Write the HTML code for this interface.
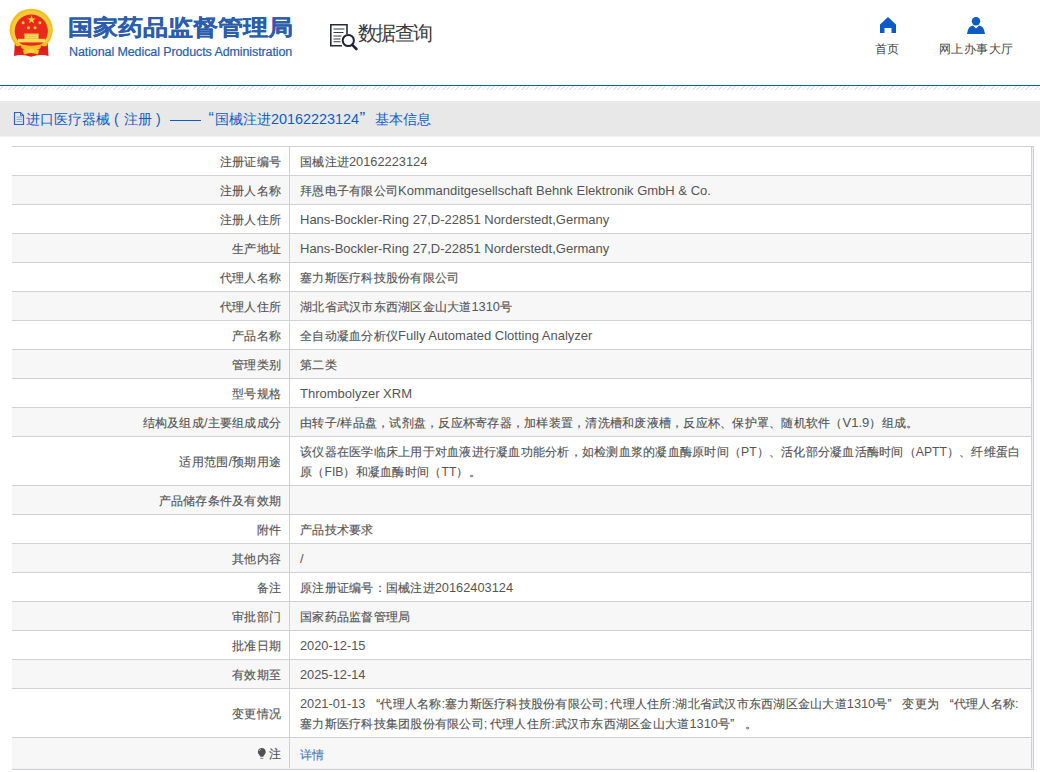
<!DOCTYPE html>
<html><head><meta charset="utf-8">
<style>
*{margin:0;padding:0;box-sizing:border-box}
html,body{text-spacing-trim:space-all;width:1040px;height:772px;overflow:hidden;background:#fff;font-family:"Liberation Sans",sans-serif}
.abs{position:absolute}
#hdrline{position:absolute;left:0;top:85px;width:1040px;height:1px;background:#0a5cc0}
#hatch{position:absolute;left:0;top:86px;width:1040px;height:4px;background:repeating-linear-gradient(135deg,#fff 0,#fff 2px,#e6e6e6 2px,#e6e6e6 3.1px)}
#bar{position:absolute;left:0;top:101px;width:1040px;height:35px;background:#e8e8e8}
#bartext{position:absolute;left:26px;top:109px;font-size:14px;line-height:20px;color:#0f5cc4;white-space:nowrap}
#bartext span{position:absolute;top:0}
#tbl{position:absolute;left:12px;top:146px;width:1022px;height:624px;border-right:1px solid #d0d0d0;border-bottom:1px solid #d0d0d0}
#tbl:before{content:"";position:absolute;left:0;top:622px;width:1021px;height:1px;background:#eef0f6}
#tbl:after{content:"";position:absolute;left:1020px;top:1px;width:1px;height:622px;background:#eef0f6}
.row{position:absolute;left:0;width:1020px;border-top:1px solid #d0d0d0;border-right:1px solid #d0d0d0;font-size:12px;color:#555;line-height:20px;letter-spacing:0.25px;-webkit-text-stroke:0.15px #555}
.row.alt{background:#f7f7f7}
.lab{position:absolute;left:0;top:0;width:278px;height:100%;border-right:1px solid #d0d0d0}
.lab span{position:absolute;right:8px;top:5px;white-space:nowrap}
.val{position:absolute;left:278px;top:0;right:0;height:100%}
.val span{position:absolute;left:10px;top:5px;white-space:nowrap}
.val a{color:#3b8cf4;text-decoration:none}
i{font-style:normal}
.lat{font-size:13px;letter-spacing:0;-webkit-text-stroke:0}
.num{font-size:12.8px;letter-spacing:0;-webkit-text-stroke:0}
.ql,.qr{display:inline-block;width:12.25px;letter-spacing:0}
.ql{text-align:right}
.r10 .lat{font-size:12.2px}
.r18 .val span{word-spacing:-1px}
.bulb{display:inline-block;width:9px;height:12px}
</style></head>
<body>
<!-- emblem -->
<svg class="abs" style="left:0;top:0" width="60" height="62" viewBox="0 0 60 62">
 <path d="M15 40 L14 56 Q22 53.5 31 56.8 Q40 53.5 48.5 56 L47.5 40 Z" fill="#e3221a"/>
 <path d="M9.6 30.3 A21.6 21.6 0 1 1 52.8 30.3 Q52 40 46 45.5 L38.5 49 Q31 52 23.5 49 L16.5 45.5 Q10.4 40 9.6 30.3 Z" fill="#f1bd1f"/>
 <circle cx="31.2" cy="30.6" r="19.6" fill="#f6cc3a"/>
 <circle cx="31.3" cy="31" r="16.6" fill="#e8291c"/>
 <rect x="18" y="38.8" width="27" height="3.6" fill="#f9dc5a"/>
 <rect x="24.5" y="34.2" width="14" height="4.6" fill="#f9dc5a"/>
 <path d="M23.5 34.6 H39.5 L38.5 33.6 H24.5 Z" fill="#f3c640"/>
 <rect x="26" y="36" width="11" height="1" fill="#eec24a"/>
 <path d="M14.8 42 Q31 49.5 47.8 42 L46.8 45.8 Q31 53 15.8 45.8 Z" fill="#f2be22"/>
 <path d="M16 47 L21 45.5 L22 50.5 L17 52 Z M46 47 L41 45.5 L40 50.5 L45 52 Z" fill="#d81e16"/>
 <path d="M23 50 Q31 45.5 39 50 L38 54.5 Q31 51.5 24 54.5 Z" fill="#f4c52a"/>
 <ellipse cx="31" cy="51" rx="3.2" ry="1.8" fill="#f8d650"/>
 <path d="M31.5 15.2 L32.6 18.4 L35.8 18.4 L33.2 20.3 L34.2 23.4 L31.5 21.5 L28.8 23.4 L29.8 20.3 L27.2 18.4 L30.4 18.4Z" fill="#f6d23a"/>
 <circle cx="23.1" cy="22.8" r="1.5" fill="#f6d23a"/>
 <circle cx="39.9" cy="22.8" r="1.5" fill="#f6d23a"/>
 <circle cx="28.4" cy="27.7" r="1.5" fill="#f6d23a"/>
 <circle cx="35" cy="27.7" r="1.5" fill="#f6d23a"/>
</svg>
<div class="abs" style="left:68px;top:11px;font-size:24.6px;line-height:30px;font-weight:900;color:#2c5dab;-webkit-text-stroke:0.25px #2c5dab;white-space:nowrap;transform:scaleY(0.88);transform-origin:0 100%">国家药品监督管理局</div>
<div class="abs" style="left:69px;top:44px;font-size:12.5px;line-height:16px;color:#2c5dab;-webkit-text-stroke:0.2px #2c5dab;white-space:nowrap;letter-spacing:-0.1px">National Medical Products Administration</div>
<!-- search doc icon -->
<svg class="abs" style="left:328px;top:22px" width="32" height="32" viewBox="0 0 32 32">
 <path d="M14 23.8 H2.8 V2.8 H19 V12" fill="none" stroke="#2a2a3a" stroke-width="1.6"/>
 <path d="M5.5 7 H16.5 M5.5 10.5 H15.5 M5.5 14 H13.5 M5.5 17 H12.5 M5.5 19.8 H12.5" stroke="#3a3a48" stroke-width="1.1"/>
 <circle cx="20.3" cy="18.5" r="5.6" fill="none" stroke="#222236" stroke-width="2"/>
 <path d="M24.3 22.8 L28.4 27" stroke="#222236" stroke-width="2.6" stroke-linecap="round"/>
</svg>
<div class="abs" style="left:358px;top:20px;font-size:20px;line-height:26px;letter-spacing:-1.6px;color:#3a3a3a;white-space:nowrap">数据查询</div>
<!-- home icon -->
<svg class="abs" style="left:879px;top:16px" width="18" height="18" viewBox="0 0 18 18">
 <path d="M9 1 L17 8.5 V17 H12.5 V12 H5.5 V17 H1 V8.5 Z" fill="#0b5bc5"/>
</svg>
<div class="abs" style="left:875px;top:41px;font-size:12px;line-height:17px;letter-spacing:0.3px;color:#444;white-space:nowrap">首页</div>
<!-- user icon -->
<svg class="abs" style="left:966px;top:16px" width="20" height="19" viewBox="0 0 20 19">
 <circle cx="10" cy="5.2" r="4.2" fill="#0b5bc5"/>
 <path d="M1 18 Q2 10 7 9.6 L10 12.5 L13 9.6 Q18 10 19 18 Z" fill="#0b5bc5"/>
</svg>
<div class="abs" style="left:939px;top:41px;font-size:12px;line-height:17px;letter-spacing:0.45px;color:#444;white-space:nowrap">网上办事大厅</div>

<div id="hdrline"></div>
<div id="hatch"></div>
<div id="bar"></div><div class="abs" style="left:0;top:136px;width:1040px;height:1px;background:#f1f3f8"></div>
<svg class="abs" style="left:13px;top:111px" width="13" height="15" viewBox="0 0 13 15">
 <path d="M1.5 1.5 H7.5 L10.5 4.5 V13.5 H1.5 Z" fill="none" stroke="#2f63c9" stroke-width="1.2"/>
 <path d="M7.5 1.5 V4.5 H10.5" fill="none" stroke="#2f63c9" stroke-width="0.8"/>
 <path d="M3.5 6 H9 M3.5 8.3 H9 M3.5 10.6 H9" stroke="#7d9be0" stroke-width="0.9"/>
</svg>
<div id="bartext">
<span style="left:0">进口医疗器械</span>
<span style="left:88px;font-family:'Liberation Sans'">(</span>
<span style="left:98px">注册</span>
<span style="left:130px;font-family:'Liberation Sans'">)</span>
<b style="position:absolute;left:144px;top:11px;width:31px;height:1px;background:#0f5cc4"></b>
<span style="left:182.5px;font-family:'Liberation Sans';font-size:16px">&#8220;</span>
<span style="left:189px">国械注进<i style="font-style:normal;font-size:14.4px">20162223124</i><i style="font-style:normal;font-family:'Liberation Sans';font-size:17px;margin-left:.5px">&#8221;</i></span>
<span style="left:349px">基本信息</span>
</div>

<svg class="abs" style="left:256px;top:746px;z-index:2" width="11" height="14" viewBox="0 0 11 14">
 <path d="M5.8 2 C3.6 2 1.9 3.7 1.9 5.9 C1.9 7.6 3 8.3 3.7 9.6 L4.4 10.8 H7.2 L7.9 9.6 C8.6 8.3 9.7 7.6 9.7 5.9 C9.7 3.7 8 2 5.8 2 Z" fill="#505050"/>
 <path d="M3.3 5 Q3.6 3.6 5 3.1" stroke="#bdbdbd" stroke-width="0.9" fill="none"/>
 <rect x="4.3" y="11.8" width="3" height="1" fill="#777"/>
</svg>
<div id="tbl"><b style="position:absolute;left:0;top:0;width:1021px;height:1px;background:#d0d0d0;z-index:1"></b>
<div class="row r0" style="top:0px;height:29px"><div class="lab"><span>注册证编号</span></div><div class="val"><span>国械注进<i class="num">20162223124</i></span></div></div>
<div class="row alt r1" style="top:29px;height:29px"><div class="lab"><span>注册人名称</span></div><div class="val"><span>拜恩电子有限公司<i class="lat">Kommanditgesellschaft Behnk Elektronik GmbH &amp; Co.</i></span></div></div>
<div class="row r2" style="top:58px;height:29px"><div class="lab"><span>注册人住所</span></div><div class="val"><span><i class="lat">Hans-Bockler-Ring 27,D-22851 Norderstedt,Germany</i></span></div></div>
<div class="row alt r3" style="top:87px;height:29px"><div class="lab"><span>生产地址</span></div><div class="val"><span><i class="lat">Hans-Bockler-Ring 27,D-22851 Norderstedt,Germany</i></span></div></div>
<div class="row r4" style="top:116px;height:29px"><div class="lab"><span>代理人名称</span></div><div class="val"><span>塞力斯医疗科技股份有限公司</span></div></div>
<div class="row alt r5" style="top:145px;height:29px"><div class="lab"><span>代理人住所</span></div><div class="val"><span>湖北省武汉市东西湖区金山大道<i class="num">1310</i>号</span></div></div>
<div class="row r6" style="top:174px;height:29px"><div class="lab"><span>产品名称</span></div><div class="val"><span>全自动凝血分析仪<i class="lat">Fully Automated Clotting Analyzer</i></span></div></div>
<div class="row alt r7" style="top:203px;height:29px"><div class="lab"><span>管理类别</span></div><div class="val"><span>第二类</span></div></div>
<div class="row r8" style="top:232px;height:29px"><div class="lab"><span>型号规格</span></div><div class="val"><span><i class="lat">Thrombolyzer XRM</i></span></div></div>
<div class="row alt r9" style="top:261px;height:29px"><div class="lab"><span>结构及组成<i class="num">/</i>主要组成成分</span></div><div class="val"><span>由转子<i class="num">/</i>样品盘，试剂盘，反应杯寄存器，加样装置，清洗槽和废液槽，反应杯、保护罩、随机软件（<i class="lat">V1.9</i>）组成。</span></div></div>
<div class="row r10" style="top:290px;height:49px"><div class="lab"><span style="top:15px">适用范围<i class="num">/</i>预期用途</span></div><div class="val"><span>该仪器在医学临床上用于对血液进行凝血功能分析，如检测血浆的凝血酶原时间（<i class="lat">PT</i>）、活化部分凝血活酶时间（<i class="lat">APTT</i>）、纤维蛋白<br>原（<i class="lat">FIB</i>）和凝血酶时间（<i class="lat">TT</i>）。</span></div></div>
<div class="row alt r11" style="top:339px;height:29px"><div class="lab"><span>产品储存条件及有效期</span></div><div class="val"><span></span></div></div>
<div class="row r12" style="top:368px;height:29px"><div class="lab"><span>附件</span></div><div class="val"><span>产品技术要求</span></div></div>
<div class="row alt r13" style="top:397px;height:29px"><div class="lab"><span>其他内容</span></div><div class="val"><span><i class="num">/</i></span></div></div>
<div class="row r14" style="top:426px;height:29px"><div class="lab"><span>备注</span></div><div class="val"><span>原注册证编号：国械注进<i class="num">20162403124</i></span></div></div>
<div class="row alt r15" style="top:455px;height:29px"><div class="lab"><span>审批部门</span></div><div class="val"><span>国家药品监督管理局</span></div></div>
<div class="row r16" style="top:484px;height:29px"><div class="lab"><span>批准日期</span></div><div class="val"><span><i class="num">2020-12-15</i></span></div></div>
<div class="row alt r17" style="top:513px;height:29px"><div class="lab"><span>有效期至</span></div><div class="val"><span><i class="num">2025-12-14</i></span></div></div>
<div class="row r18" style="top:542px;height:49px"><div class="lab"><span style="top:15px">变更情况</span></div><div class="val"><span><i class="num">2021-01-13 </i><i class="ql">“</i>代理人名称<i class="num">:</i>塞力斯医疗科技股份有限公司<i class="num">; </i>代理人住所<i class="num">:</i>湖北省武汉市东西湖区金山大道<i class="num">1310</i>号<i class="qr">”</i><i class="num"> </i>变更为<i class="num"> </i><i class="ql">“</i>代理人名称<i class="num">:</i><br>塞力斯医疗科技集团股份有限公司<i class="num">; </i>代理人住所<i class="num">:</i>武汉市东西湖区金山大道<i class="num">1310</i>号<i class="qr">”</i><i class="num"> </i>。</span></div></div>
<div class="row alt r19" style="top:591px;height:31px"><div class="lab"><span style="top:6px">注</span></div><div class="val"><span style="top:7px"><a>详情</a></span></div></div>
</div>
</body></html>
